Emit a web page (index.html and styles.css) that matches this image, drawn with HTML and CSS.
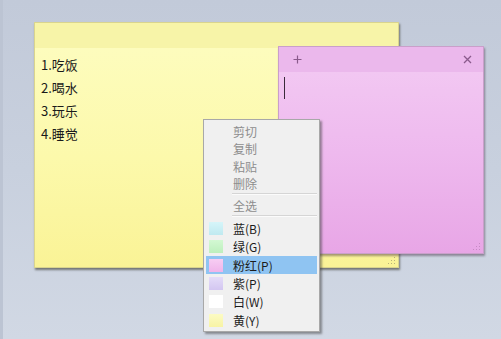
FILE: index.html
```html
<!DOCTYPE html>
<html>
<head>
<meta charset="utf-8">
<link rel="stylesheet" href="styles.css">
</head>
<body>
<div class="desk">
  <div class="note note-yellow">
    <div class="note-head"></div>
    <div class="note-body">
      <div class="line">1.吃饭</div>
      <div class="line">2.喝水</div>
      <div class="line">3.玩乐</div>
      <div class="line">4.睡觉</div>
    </div>
    <svg class="grip" width="8" height="8" viewBox="0 0 8 8"><g fill="#b9b37a"><rect x="6" y="0" width="1" height="1"/><rect x="3" y="3" width="1" height="1"/><rect x="6" y="3" width="1" height="1"/><rect x="0" y="6" width="1" height="1"/><rect x="3" y="6" width="1" height="1"/><rect x="6" y="6" width="1" height="1"/></g></svg>
  </div>

  <div class="note note-pink">
    <div class="note-head">
      <svg class="ico" width="9" height="9" viewBox="0 0 9 9"><path d="M4.5 0.5v8M0.5 4.5h8" stroke="#8a5a8c" stroke-width="1.2"/></svg>
      <svg class="ico" width="9" height="9" viewBox="0 0 9 9"><path d="M1 1l7 7M8 1l-7 7" stroke="#8a5a8c" stroke-width="1.3"/></svg>
    </div>
    <div class="note-body">
      <div class="caret"></div>
    </div>
    <svg class="grip" width="8" height="8" viewBox="0 0 8 8"><g fill="#c68ac4"><rect x="6" y="0" width="1" height="1"/><rect x="3" y="3" width="1" height="1"/><rect x="6" y="3" width="1" height="1"/><rect x="0" y="6" width="1" height="1"/><rect x="3" y="6" width="1" height="1"/><rect x="6" y="6" width="1" height="1"/></g></svg>
  </div>

  <div class="menu">
    <div class="item off">剪切</div>
    <div class="item off">复制</div>
    <div class="item off">粘贴</div>
    <div class="item off">删除</div>
    <div class="sep"></div>
    <div class="item off">全选</div>
    <div class="sep"></div>
    <div class="item color"><span class="sw sw-blue"></span>蓝(B)</div>
    <div class="item color"><span class="sw sw-green"></span>绿(G)</div>
    <div class="item color hot"><span class="sw sw-pink"></span>粉红(P)</div>
    <div class="item color"><span class="sw sw-purple"></span>紫(P)</div>
    <div class="item color"><span class="sw sw-white"></span>白(W)</div>
    <div class="item color"><span class="sw sw-yellow"></span>黄(Y)</div>
  </div>
</div>
</body>
</html>
```
FILE: styles.css
```css
html, body {
  margin: 0;
  padding: 0;
}
body {
  width: 501px;
  height: 339px;
  overflow: hidden;
  font-family: "Noto Sans CJK SC", "Noto Sans", sans-serif;
}
.desk {
  position: relative;
  width: 501px;
  height: 339px;
  background: linear-gradient(180deg, #c2cad9 0%, #c8d0de 50%, #d1d8e4 100%);
  border-left: 3px solid #bcc4d3;
  box-sizing: border-box;
}
.note {
  position: absolute;
  display: flex;
  flex-direction: column;
  box-sizing: border-box;
}
.note-yellow {
  left: 31px;
  top: 22px;
  width: 365px;
  height: 246px;
  border: 1px solid #d9d48e;
  box-shadow: 1px 2px 2px rgba(40, 40, 30, 0.55);
}
.note-yellow .note-head {
  height: 25px;
  background: #f7f4a8;
  flex: none;
}
.note-yellow .note-body {
  flex: 1;
  background: linear-gradient(180deg, #fdfcbd 0%, #fcf9ab 50%, #faf396 100%);
  padding: 5px 0 0 6px;
}
.line {
  font-size: 13px;
  line-height: 23px;
  color: #1a1a1a;
}
.note-pink {
  left: 275px;
  top: 46px;
  width: 206px;
  height: 208px;
  border: 1px solid #c99fca;
  box-shadow: 1px 2px 2px rgba(60, 40, 60, 0.45);
}
.note-pink .note-head {
  height: 25px;
  flex: none;
  background: #ebb8ec;
  display: flex;
  align-items: center;
  justify-content: space-between;
  padding: 0 11px 0 14px;
}
.note-pink .note-body {
  flex: 1;
  background: linear-gradient(180deg, #f2c7f2 0%, #eeb9ee 45%, #e8a6e6 100%);
  padding: 5px 0 0 5px;
}
.caret {
  width: 1px;
  height: 22px;
  background: #3a2a3a;
}
.grip {
  position: absolute;
  right: 2px;
  bottom: 2px;
}
.menu {
  position: absolute;
  left: 200px;
  top: 119px;
  width: 117px;
  box-sizing: border-box;
  background: #f0f0f0;
  border: 1px solid #a8a8a8;
  box-shadow: 2px 2px 2px rgba(60, 60, 60, 0.5);
  padding: 3px 2px 2px;
  display: flex;
  flex-direction: column;
}
.item {
  flex: none;
  display: flex;
  align-items: center;
  height: 17.3px;
  padding-left: 27px;
  font-size: 12px;
  color: #1c1c1c;
}
.item.off {
  color: #8d8d8d;
}
.item.color {
  height: 18.3px;
  padding-left: 3px;
}
.item.hot {
  background: #8fc4f2;
}
.sep {
  flex: none;
  height: 1px;
  margin: 1px 0 2px 26px;
  background: #d5d5d5;
  border-bottom: 1px solid #fbfbfb;
}
.sw {
  width: 14px;
  height: 13px;
  margin-right: 10px;
  box-sizing: border-box;
}
.sw-blue { background: linear-gradient(180deg, #d6f5f9, #bfe9f0); }
.sw-green { background: linear-gradient(180deg, #d3f8d3, #bdefbd); }
.sw-pink { background: linear-gradient(180deg, #f7cdf3, #efb4ea); }
.sw-purple { background: linear-gradient(180deg, #e4dcf8, #d3c6f1); }
.sw-white { background: #ffffff; }
.sw-yellow { background: linear-gradient(180deg, #fcfbc4, #f7f3a4); }
```
